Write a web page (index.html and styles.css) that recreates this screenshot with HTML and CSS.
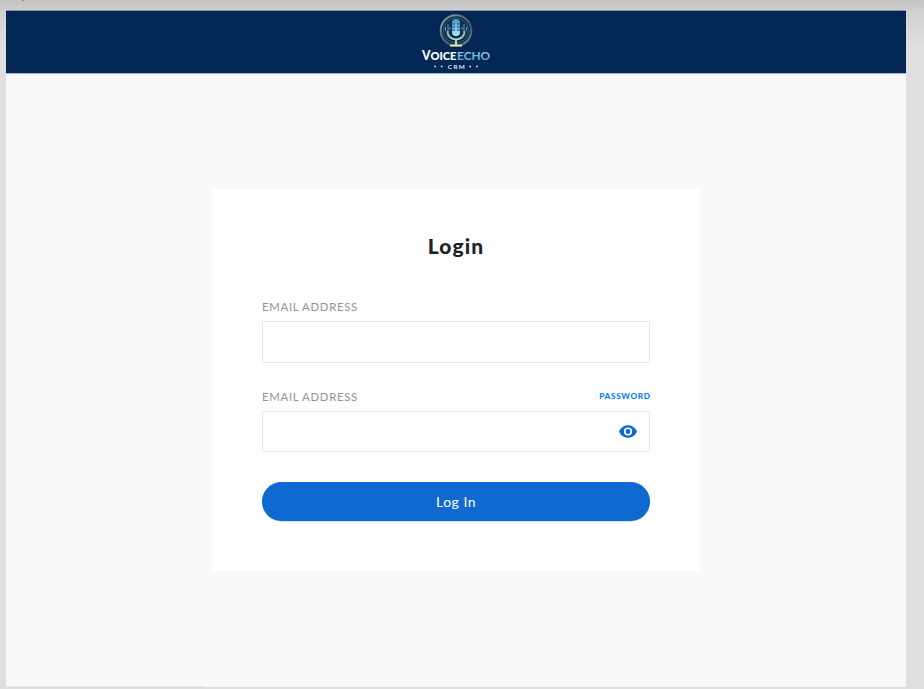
FILE: index.html
```html
<!DOCTYPE html>
<html lang="en">
<head>
<meta charset="utf-8">
<title>VoiceEcho CRM – Login</title>
<link rel="stylesheet" href="styles.css">
</head>
<body>
<span class="speck"></span>
<div class="frame">
  <header class="header">
    <svg class="logo" viewBox="0 0 72 60" role="img" aria-label="VoiceEcho CRM">
      <defs>
        <linearGradient id="ring" x1="0" y1="0" x2="1" y2="1">
          <stop offset="0" stop-color="#9ca8ab"/><stop offset=".4" stop-color="#55717f"/><stop offset=".7" stop-color="#345b79"/><stop offset="1" stop-color="#8fa787"/>
        </linearGradient>
        <linearGradient id="mic" x1="0" y1="0" x2="0" y2="1">
          <stop offset="0" stop-color="#359bd2"/><stop offset="1" stop-color="#b4e5f3"/>
        </linearGradient>
        <linearGradient id="stand" gradientUnits="userSpaceOnUse" x1="0" y1="18" x2="0" y2="34">
          <stop offset="0" stop-color="#6fb2c9"/><stop offset="1" stop-color="#e8e9b0"/>
        </linearGradient>
        <linearGradient id="echo" x1="0" y1="0" x2="0" y2="1">
          <stop offset="0" stop-color="#a9dbf3"/><stop offset="1" stop-color="#4c9bd4"/>
        </linearGradient>
      </defs>
      <circle cx="36" cy="18.5" r="15.3" fill="#102f4c" stroke="url(#ring)" stroke-width="2"/>
      <circle cx="36" cy="18.5" r="12.6" fill="none" stroke="#3b586b" stroke-width="1"/>
      <path d="M25.500 15v4M28 12v8M30 15v3M42 15v3M44 12v8M46.500 15v4" stroke="#4aa2cb" stroke-width="1"/>
      <rect x="32" y="7" width="8" height="17" rx="4" fill="url(#mic)"/>
      <path d="M32 12h3M37 12h3M32 15h3M37 15h3M32 18h3M37 18h3" stroke="#164569" stroke-width="1"/>
      <path d="M27.500 19v1a8.500 7.500 0 0 0 17 0V19M36 27.500v5M30 33.500h12" fill="none" stroke="url(#stand)" stroke-width="2"/>
      <text class="brand" x="2" y="48" textLength="34.500" lengthAdjust="spacingAndGlyphs"><tspan class="initial">V</tspan>OICE</text>
      <text class="brand echo" x="37" y="48" textLength="33.200" lengthAdjust="spacingAndGlyphs">ECHO</text>
      <text class="crm" x="27.800" y="56.600" textLength="17" lengthAdjust="spacing">CRM</text>
      <g fill="#c0d4c4"><circle cx="15" cy="54.500" r="1"/><circle cx="21.700" cy="54.500" r="1"/><circle cx="50.200" cy="54.500" r="1"/><circle cx="57" cy="54.500" r="1"/></g>
    </svg>
  </header>
  <main class="content">
    <form class="card">
      <h1 class="title">Login</h1>
      <div class="row"><label class="label" for="email">EMAIL ADDRESS</label></div>
      <input class="field" id="email" type="text">
      <div class="row second"><label class="label" for="password">EMAIL ADDRESS</label><a class="link">PASSWORD</a></div>
      <div class="password">
        <input class="field short" id="password" type="password">
        <svg class="eye" viewBox="0 0 18 13"><path fill="#0f69d1" fill-rule="evenodd" d="M9 .2C5 .2 1.500 2.700 0 6.500c1.500 3.800 5 6.300 9 6.300s7.500-2.500 9-6.300C16.500 2.700 13 .200 9 .200Zm0 10.400a4.100 4.100 0 1 1 0-8.200 4.100 4.100 0 0 1 0 8.200Zm0-1.700a2.400 2.400 0 1 0 0-4.800 2.400 2.400 0 0 0 0 4.800Z"/></svg>
      </div>
      <button class="submit" type="button">Log In</button>
    </form>
  </main>
</div>
</body>
</html>
```

FILE: styles.css
```css
* { box-sizing: border-box; }
body {
  margin: 0;
  height: 689px;
  padding: 10px 18px 0 6px;
  overflow: hidden;
  background: linear-gradient(#c4c4c4, #d2d2d2 14px, #dfdfdf 48px, #dfdfdf) no-repeat #dfdfdf;
  font-family: Lato, sans-serif;
}
.speck {
  position: absolute;
  left: 22px;
  top: 0;
  width: 2px;
  height: 1px;
  background: #858585;
}
.frame {
  width: 900px;
  height: 677px;
  background: linear-gradient(#e9e9e9, #e9e9e9) 0 100% / 198px 1px no-repeat #f9f9f9;
}
.header {
  height: 64px;
  display: flex;
  justify-content: center;
  background: #032856;
  border-top: 1px solid #8696a7;
  border-bottom: 1px solid #9eb0c5;
}
.logo { width: 72px; height: 60px; margin-top: 1px; }
.brand {
  font: 900 12px Lato, sans-serif;
  fill: #fff;
}
.initial { font-size: 13px; }
.echo { font-weight: 700; fill: url(#echo); }
.crm {
  font: 700 6.3px Lato, sans-serif;
  fill: #e3edf5;
}
.content {
  display: flex;
  justify-content: center;
  padding-top: 115px;
}
.card {
  width: 488px;
  height: 382px;
  padding: 43px 50px 0;
  background: #fff;
}
.title {
  margin: 0 0 40px;
  font: 900 21px/28px Lato, sans-serif;
  letter-spacing: 1.1px;
  text-align: center;
  color: #202124;
}
.row {
  display: flex;
  justify-content: space-between;
  height: 21px;
}
.second { margin-top: 27px; }
.label {
  font: 400 11.4px/14px Lato, sans-serif;
  letter-spacing: .67px;
  color: #929297;
}
.link {
  font: 900 8.2px/12px Lato, sans-serif;
  letter-spacing: .65px;
  margin-right: -.6px;
  color: #087bf1;
}
.field {
  display: block;
  width: 100%;
  height: 42px;
  padding: 0 12px;
  border: 1px solid #e6e6e6;
  border-radius: 1px;
  background: #fff;
}
.short { height: 41px; }
.password { position: relative; }
.eye {
  position: absolute;
  right: 13px;
  top: 14px;
  width: 18px;
  height: 13px;
}
.submit {
  display: block;
  width: 100%;
  height: 39px;
  margin-top: 30px;
  padding: 0;
  border: 0;
  border-radius: 20px;
  background: #0f69d1;
  box-shadow: 0 .5px 0 #9fc3ed;
  color: #fff;
  font: 400 14px/39px Lato, sans-serif;
  letter-spacing: .5px;
}
```
